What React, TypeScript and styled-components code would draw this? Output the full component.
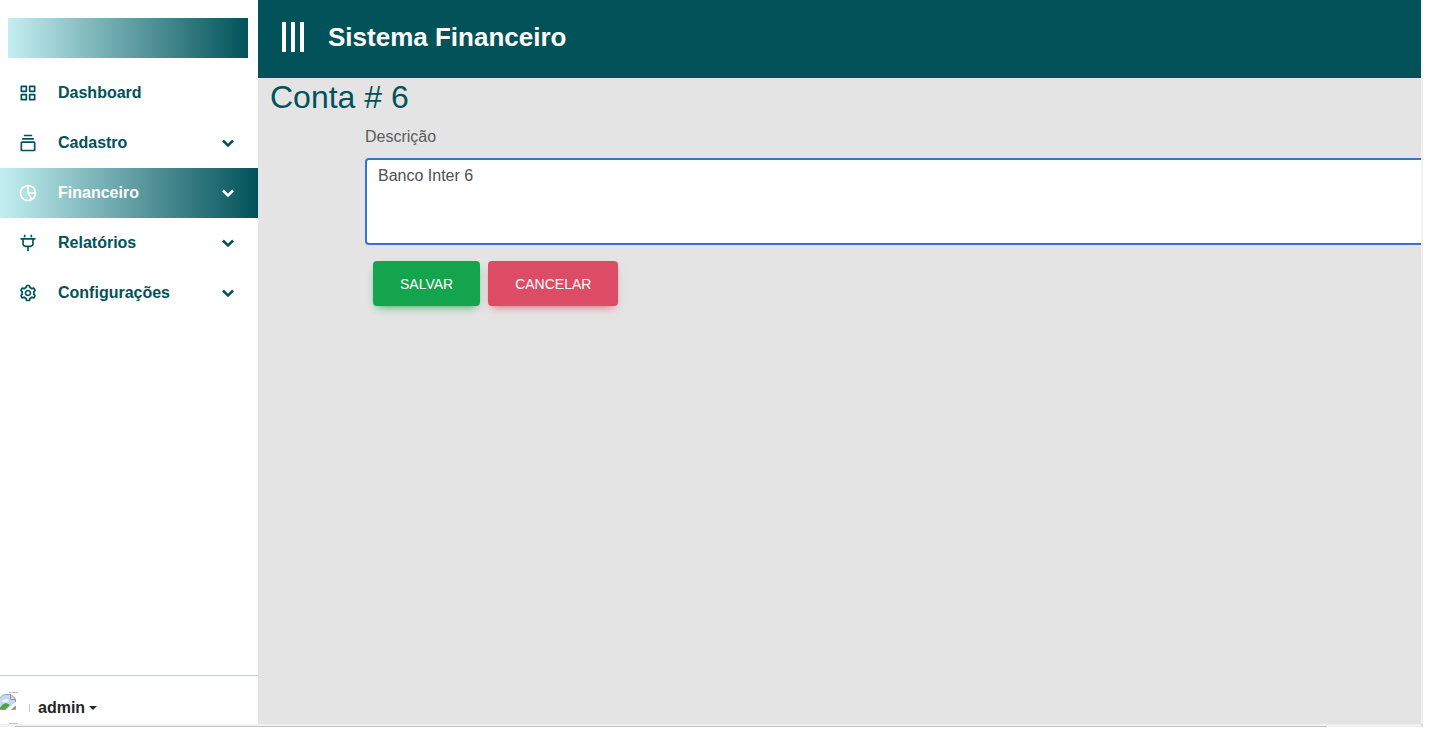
import React from "react";
import styled, { createGlobalStyle, css } from "styled-components";
import {
  BiGridAlt,
  BiCollection,
  BiPieChartAlt2,
  BiPlug,
  BiCog,
  BiSolidChevronDown,
} from "react-icons/bi";

const teal = "#025259";
const fade = `linear-gradient(to right, #c4eff2, ${teal})`;

const GlobalStyle = createGlobalStyle`
  *, *::before, *::after { box-sizing: border-box; }
  body {
    margin: 0;
    background: #fff;
    font-family: "Liberation Sans", Arial, sans-serif;
    font-size: 16px;
    line-height: 24px;
    color: #4f4f4f;
  }
  button, textarea { font: inherit; }
`;

const Frame = styled.div`
  display: grid;
  grid-template-columns: 1fr 2px;
  grid-template-rows: 1fr 3px;
  height: calc(100vh - 10px);
  margin-right: 13px;
`;

const Shell = styled.div`
  display: grid;
  grid-template-columns: 258px minmax(0, 1fr);
  min-height: 0;
  overflow: hidden;
`;

const VerticalTrack = styled.div`
  background: #f1f1f1;
`;

const HorizontalTrack = styled.div`
  display: flex;
  align-items: flex-end;
  padding: 0 94px 0 15px;
  background: #f1f1f1;
`;

const Thumb = styled.div`
  flex: 1;
  height: 1px;
  background: #c1c1c1;
`;

const TrackCorner = styled.div`
  background: #dcdcdc;
`;

const Sidebar = styled.aside`
  display: flex;
  flex-direction: column;
  min-height: 0;
  background: #fff;
`;

const Brand = styled.div`
  height: 40px;
  margin: 18px 10px 10px 8px;
  background: ${fade};
`;

const Nav = styled.nav`
  flex: 1;
`;

const itemStyle = css<{ $active?: boolean }>`
  display: flex;
  align-items: center;
  width: 100%;
  height: 50px;
  padding: 0 20px 0 18px;
  border: 0;
  background: ${(p) => (p.$active ? fade : "transparent")};
  color: ${(p) => (p.$active ? "#fff" : teal)};
  font-weight: 700;
  text-align: left;
  text-decoration: none;
  cursor: pointer;
`;

const NavLink = styled.a`
  ${itemStyle}
`;

const NavButton = styled.button<{ $active?: boolean }>`
  ${itemStyle}
`;

const NavLabel = styled.span`
  flex: 1;
  margin-left: 20px;
`;

const Profile = styled.button`
  display: flex;
  align-items: center;
  height: 49px;
  padding: 16px 0 0;
  border: 0;
  border-top: 1px solid #bfd3d5;
  background: #fff;
  color: #262626;
  font-weight: 700;
  cursor: pointer;
`;

const UserName = styled.span`
  margin: 0 4px 0 8px;
`;

const Main = styled.main`
  min-width: 0;
  overflow: hidden;
  background: #e4e4e4;
`;

const Header = styled.header`
  display: flex;
  align-items: center;
  gap: 24px;
  height: 78px;
  padding: 0 24px 4px;
  background: ${teal};
  color: #fff;
`;

const MenuButton = styled.button`
  display: flex;
  padding: 0;
  border: 0;
  background: none;
  color: inherit;
  cursor: pointer;
`;

const SystemName = styled.span`
  font-size: 26px;
  line-height: 32px;
  font-weight: 700;
`;

const PageTitle = styled.h1`
  margin: 0 12px 9px;
  color: ${teal};
  font-size: 32px;
  line-height: 38px;
  font-weight: 400;
`;

const Form = styled.form`
  width: 100%;
  margin-left: 107px;
`;

const FieldLabel = styled.label`
  display: block;
  margin-bottom: 9px;
  color: #5c5c5c;
`;

const Description = styled.textarea`
  display: block;
  width: 100%;
  height: 87px;
  padding: 4px 11px;
  border: 2px solid #3b71ca;
  border-radius: 4px;
  outline: 0;
  background: #fff;
  color: #4f4f4f;
  resize: none;
`;

const Actions = styled.div`
  display: flex;
  gap: 8px;
  padding: 16px 8px;
`;

const ActionButton = styled.button<{ $color: string }>`
  height: 45px;
  padding: 0 27px;
  border: 0;
  border-radius: 4px;
  background: ${(p) => p.$color};
  box-shadow: 0 4px 9px -4px ${(p) => p.$color};
  color: #fff;
  font-size: 14px;
  text-transform: uppercase;
  cursor: pointer;
`;

const sections = [
  { label: "Cadastro", Icon: BiCollection },
  { label: "Financeiro", Icon: BiPieChartAlt2, active: true },
  { label: "Relatórios", Icon: BiPlug },
  { label: "Configurações", Icon: BiCog },
];

function MenuBars() {
  return (
    <svg width="22" height="30" viewBox="0 0 22 30" fill="currentColor" aria-hidden="true">
      <rect width="4" height="30" />
      <rect x="9" width="4" height="30" />
      <rect x="18" width="4" height="30" />
    </svg>
  );
}

function Avatar() {
  return (
    <svg width="30" height="32" viewBox="0 0 30 32" fill="none" aria-hidden="true">
      <path d="M9 .5h9M9 31.500h9M29.500 12v8" stroke="#c4c4c4" />
      <path d="M0 5l3-3h8l4 5v5l-7 6H0z" fill="#c5d7f7" />
      <path d="M2 10c0-2 2-3 3-2 1-2 4-1 4 2z" fill="#f4f8ff" />
      <path d="M0 17v-1c3-5 6-6 10-3l-4 4z" fill="#4fa536" />
      <path d="M11 17l4-4v4z" fill="#69b253" />
      <path d="M5 2.500h6l4.500 4.500v3M10.500 3v4.500h5M0 17.500h6M11 17.500h4.500v-3.500" stroke="#9b9b9b" />
      <path d="M5 2.500Q2 3 0 6" stroke="#b5b5b5" />
      <path d="M6 18l10-8v3l-5 5z" fill="#fff" />
    </svg>
  );
}

function Caret() {
  return (
    <svg width="8" height="4" viewBox="0 0 8 4" fill="currentColor" aria-hidden="true">
      <path d="M0 0h8L4 4z" />
    </svg>
  );
}

export default function App() {
  return (
    <>
      <GlobalStyle />
      <Frame>
        <Shell>
          <Sidebar>
            <Brand />
            <Nav>
              <NavLink href="#dashboard">
                <BiGridAlt size={20} />
                <NavLabel>Dashboard</NavLabel>
              </NavLink>
              {sections.map(({ label, Icon, active }) => (
                <NavButton key={label} type="button" $active={active}>
                  <Icon size={20} />
                  <NavLabel>{label}</NavLabel>
                  <BiSolidChevronDown size={20} />
                </NavButton>
              ))}
            </Nav>
            <Profile type="button">
              <Avatar />
              <UserName>admin</UserName>
              <Caret />
            </Profile>
          </Sidebar>
          <Main>
            <Header>
              <MenuButton type="button" aria-label="Menu">
                <MenuBars />
              </MenuButton>
              <SystemName>Sistema Financeiro</SystemName>
            </Header>
            <PageTitle>Conta # 6</PageTitle>
            <Form>
              <FieldLabel htmlFor="descricao">Descrição</FieldLabel>
              <Description id="descricao" defaultValue="Banco Inter 6" />
              <Actions>
                <ActionButton type="submit" $color="#14a44d">
                  Salvar
                </ActionButton>
                <ActionButton type="button" $color="#dc4c64">
                  Cancelar
                </ActionButton>
              </Actions>
            </Form>
          </Main>
        </Shell>
        <VerticalTrack />
        <HorizontalTrack>
          <Thumb />
        </HorizontalTrack>
        <TrackCorner />
      </Frame>
    </>
  );
}
